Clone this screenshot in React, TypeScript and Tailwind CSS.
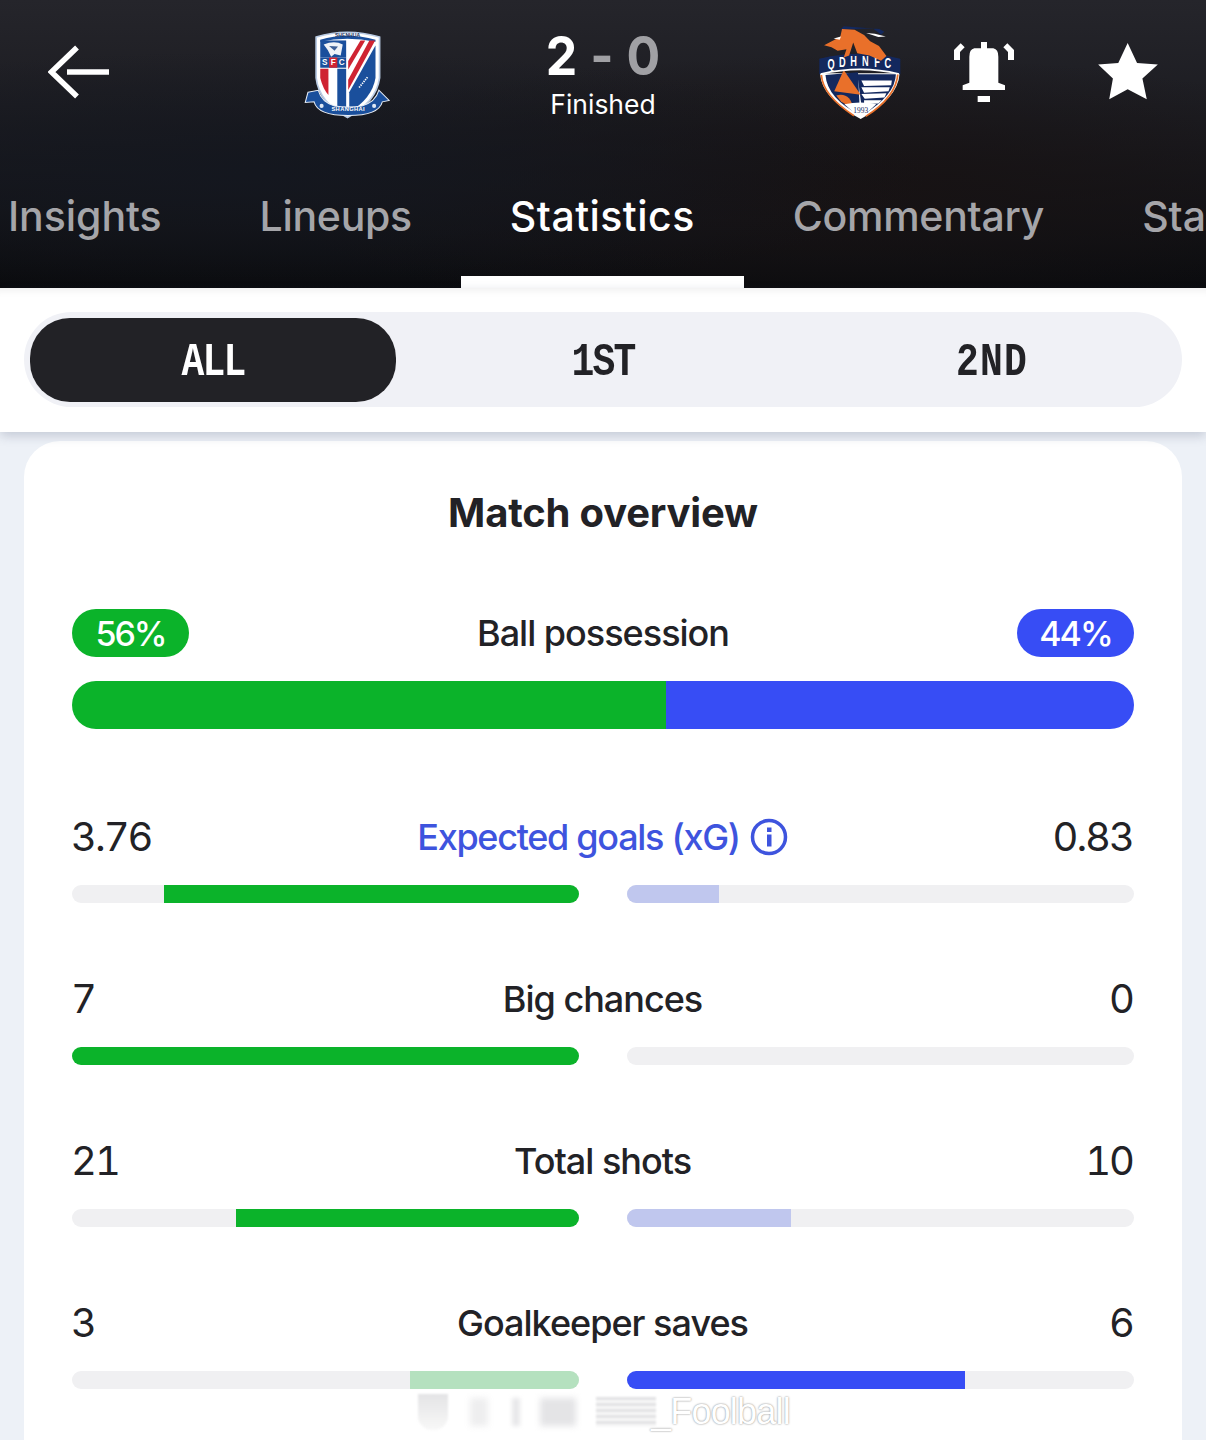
const font = "font-['Inter','Noto_Sans',sans-serif]";

function Shenhua() {
  return (
    <svg width="133" height="113" viewBox="0 9 390 330" className="shrink-0">
      <path d="M106 70Q196 42 292 70L292 190Q282 262 198 306Q114 262 106 190Z" fill="#fff" stroke="#b9cbe4" strokeWidth="5" />
      <path d="M118 78Q196 54 280 78L280 84Q196 66 118 84Z" fill="#1a4f9c" />
      <text x="198" y="70" textAnchor="middle" fontSize="15" fontWeight="700" fill="#26355f" fontFamily="Liberation Sans">SHENHUA</text>
      <path d="M118 80L194 80L194 130L118 130Z" fill="#1a4f9c" />
      <path d="M128 92Q160 78 184 92L178 124L160 120L150 128L140 108Z" fill="#eef2f7" />
      <path d="M144 96L170 98L160 110Z" fill="#3c5f96" />
      <rect x="118" y="130" width="76" height="30" fill="#1a4f9c" />
      <rect x="144" y="130" width="24" height="30" fill="#cf2432" />
      <text x="131" y="153" textAnchor="middle" fontSize="24" fontWeight="700" fill="#fff" fontFamily="Liberation Sans">S</text>
      <text x="156" y="153" textAnchor="middle" fontSize="24" fontWeight="700" fill="#fff" fontFamily="Liberation Sans">F</text>
      <text x="181" y="153" textAnchor="middle" fontSize="24" fontWeight="700" fill="#fff" fontFamily="Liberation Sans">C</text>
      <path d="M118 163L142 163L142 240Q126 222 118 190Z" fill="#cf2432" />
      <path d="M168 163L194 163L194 290Q180 282 168 272Z" fill="#1a4f9c" />
      <path d="M200 140L236 80L250 80L200 165Z" fill="#cf2432" />
      <path d="M200 195L262 80L279 80L200 225Z" fill="#cf2432" />
      <path d="M203 290L203 232L280 95L280 190Q270 250 203 290Z" fill="#1a4f9c" />
      <path d="M232 218L258 186" stroke="#fff" strokeWidth="5" strokeDasharray="4 3" />
      <path d="M82 232L112 226Q122 262 160 272Q200 278 240 272Q280 262 290 226L320 256L300 260Q290 300 200 300Q110 300 100 260L74 262Z" fill="#1a4f9c" stroke="#e8eef6" strokeWidth="3" />
      <text x="200" y="288" textAnchor="middle" fontSize="17" fontWeight="700" letterSpacing="1" fill="#fff" fontFamily="Liberation Sans">SHANGHAI</text>
      <circle cx="122" cy="272" r="6" fill="#dfe8f4" />
      <circle cx="276" cy="272" r="6" fill="#dfe8f4" />
    </svg>
  );
}

function QLetter({ c, x, y }: { c: string; x: number; y: number }) {
  return (
    <text transform={`translate(${x} ${y}) scale(0.8 1.35)`} fontSize="34" fontWeight="700" fill="#fff" fontFamily="Liberation Sans">{c}</text>
  );
}

function Qingdao() {
  return (
    <svg width="122" height="112" viewBox="-2 6 360 330" className="shrink-0">
      <path d="M60 175L295 175Q290 250 180 310Q65 250 60 175Z" fill="#fff" />
      <path d="M76 180L172 172L178 298Q82 250 76 180Z" fill="#13285e" />
      <path d="M170 178L284 178Q282 240 186 298Z" fill="#13285e" />
      <path d="M290 175Q285 245 195 302" stroke="#e9702a" strokeWidth="5" fill="none" />
      <path d="M64 180Q68 240 160 300" stroke="#e9702a" strokeWidth="5" fill="none" />
      <path d="M130 165L180 238L102 228Z" fill="#e9702a" />
      <path d="M108 240Q150 230 158 280L122 258Z" fill="#e9702a" />
      <path d="M132 266L180 308L226 266Q180 256 132 266Z" fill="#fff" />
      <path d="M182 196L272 196L270 210L190 212Z M182 216L266 216L262 228L190 232Z M182 236L256 234L250 246L192 250Z M190 254L242 254L232 264L190 266Z" fill="#fff" />
      <path d="M58 132Q180 102 297 132L297 178Q180 150 58 178Z" fill="#13285e" />
      <path d="M62 177Q180 150 293 177" stroke="#fff" strokeWidth="5" fill="none" />
      <QLetter c="Q" x={82} y={162} />
      <QLetter c="D" x={116} y={156} />
      <QLetter c="H" x={149} y={154} />
      <QLetter c="N" x={184} y={154} />
      <QLetter c="F" x={220} y={156} />
      <QLetter c="C" x={250} y={160} />
      <path d="M120 46L215 42L240 60L250 52L235 44L130 36Z" fill="#13285e" />
      <path d="M72 92L106 74L120 66L125 44L162 46L190 62L208 80L234 94L256 124L240 138L206 122L170 116L158 84L146 122L130 128L138 104L112 108L94 98Z" fill="#e9702a" />
      <path d="M196 56L232 68L254 66L222 58Z" fill="#fff" />
      <path d="M100 72L122 66L118 76Z" fill="#fff" />
      <text x="180" y="292" textAnchor="middle" fontSize="22" fill="#13285e" fontFamily="Liberation Serif">1993</text>
    </svg>
  );
}

function Back() {
  return (
    <svg width="61" height="54" viewBox="0 0 61 54" fill="none" stroke="#fff" strokeWidth="5.5">
      <path d="M29 2.5L3.5 27L29 51.5" />
      <path d="M19 27H61" />
    </svg>
  );
}

function Bell() {
  return (
    <svg width="60" height="60" viewBox="72 66 180 180" fill="#fff">
      <path d="M153 66H171V85H190Q205 88 205 110V188L225 196V210H98V196L118 188V110Q118 88 133 85H153Z" />
      <rect x="143" y="228" width="37" height="18" />
      <path d="M72 120V90L92 70L104 82L90 96V120Z" />
      <path d="M252 120V90L232 70L220 82L234 96V120Z" />
    </svg>
  );
}

function Star() {
  return (
    <svg width="60" height="57" viewBox="505 68 178 170" fill="#fff" className="mt-[-2px]">
      <path d="M593 68L621 128L683 132L637 174L650 236L593 206L538 236L549 174L505 132L565 128Z" />
    </svg>
  );
}

function Tab({ label, active, track }: { label: string; active?: boolean; track: string }) {
  return (
    <div className="relative shrink-0 px-[49px] h-[126px] flex items-center pb-[16px]">
      <span className={`text-[41px] font-medium whitespace-nowrap ${track} ${active ? "text-white" : "text-[#a5a5a9]"}`}>{label}</span>
      {active && <div className="absolute left-0 right-0 bottom-0 h-[12px] bg-white" />}
    </div>
  );
}

function Row({ left, right, label, lw, rw, lLight, rLight, info }: { left: string; right: string; label: string; lw: number; rw: number; lLight?: boolean; rLight?: boolean; info?: boolean }) {
  return (
    <div className="h-[162px] pt-[24px]">
      <div className="flex items-center justify-between h-[48px]">
        <span className="text-[40px] tabular-nums tracking-[-2px] text-[#222226] w-[200px] -ml-px">{left}</span>
        {info ? (
          <span className="flex items-center gap-[10px] text-[36px] font-medium tracking-[-1.3px] text-[#3e54de]">
            {label}
            <svg width="38" height="38" viewBox="0 0 38 38" fill="none" stroke="#3e54de">
              <circle cx="19" cy="19" r="16.5" strokeWidth="3.5" />
              <rect x="17" y="16.5" width="4.5" height="12" fill="#3e54de" stroke="none" />
              <rect x="17" y="9.5" width="4.5" height="4.5" fill="#3e54de" stroke="none" />
            </svg>
          </span>
        ) : (
          <span className="text-[36px] font-medium tracking-[-1px] text-[#222226]">{label}</span>
        )}
        <span className="text-[40px] tabular-nums tracking-[-2px] text-[#222226] w-[200px] text-right pr-px">{right}</span>
      </div>
      <div className="flex justify-between mt-[24px]">
        <div className="w-[507px] h-[18px] rounded-full bg-[#f0f0f2] overflow-hidden flex justify-end">
          <div className={`h-full ${lLight ? "bg-[#b5e1bf]" : "bg-[#0bb32a]"}`} style={{ width: lw }} />
        </div>
        <div className="w-[507px] h-[18px] rounded-full bg-[#f0f0f2] overflow-hidden flex">
          <div className={`h-full ${rLight ? "bg-[#c0c7ee]" : "bg-[#374df5]"}`} style={{ width: rw }} />
        </div>
      </div>
    </div>
  );
}

export default function App() {
  return (
    <div className={`relative w-[1206px] h-[1440px] overflow-hidden bg-[#edf1f7] ${font}`}>
      <header className="h-[288px] bg-[radial-gradient(ellipse_at_22%_60%,#14171f_0%,rgba(20,23,31,0)_50%),radial-gradient(ellipse_at_70%_65%,#171213_0%,rgba(23,18,19,0)_50%),linear-gradient(180deg,#25252b_0%,#1a1a1f_50%,#0a0b0e_100%)]">
        <div className="flex items-center h-[144px]">
          <div className="w-[156px] flex justify-center"><Back /></div>
          <div className="w-[120px] ml-[130px] flex justify-center"><Shenhua /></div>
          <div className="w-[394px] flex flex-col items-center">
            <div className="flex items-center text-[50px] font-bold leading-[56px] h-[56px] mt-[6px] scale-y-[1.08]">
              <span className="text-white">2</span>
              <span className="text-[#a0a0a4] mx-[13px]">-</span>
              <span className="text-[#a0a0a4]">0</span>
            </div>
            <span className="text-[26.5px] leading-[36px] text-white mt-[2px]">Finished</span>
          </div>
          <div className="w-[120px] flex justify-center"><Qingdao /></div>
          <div className="w-[128px] flex justify-center"><Bell /></div>
          <div className="w-[144px] ml-[8px] flex justify-center"><Star /></div>
        </div>
        <nav className="flex ml-[-41px] h-[144px] pt-[18px] overflow-hidden w-[1247px]">
          <Tab label="Insights" track="tracking-[-0.05px]" />
          <Tab label="Lineups" track="tracking-[-0.3px]" />
          <Tab label="Statistics" active track="tracking-[0.45px]" />
          <Tab label="Commentary" track="tracking-[-0.25px]" />
          <Tab label="Standings" track="tracking-[0px]" />
        </nav>
      </header>

      <section className="relative h-[144px] bg-white pt-[24px] px-[24px] shadow-[0_4px_10px_rgba(60,70,100,0.22),inset_0_10px_8px_-8px_rgba(0,0,0,0.07)]">
        <div className="grid grid-cols-3 gap-[24px] h-[95px] pt-[6px] px-[6px] pb-[5px] rounded-full bg-[#f0f1f6] font-['Liberation_Mono',monospace] font-bold text-[38px]">
          <div className="rounded-[40px] bg-[#222226] text-white flex items-center justify-center pt-[5px]">
            <span className="inline-block scale-y-[1.2] tracking-[-1.8px]">ALL</span>
          </div>
          <div className="text-[#222226] flex items-center justify-center pt-[5px]">
            <span className="inline-block scale-y-[1.2] tracking-[-1.8px]">1ST</span>
          </div>
          <div className="text-[#222226] flex items-center justify-center pt-[5px]">
            <span className="inline-block scale-y-[1.2] tracking-[1.2px] mr-[2px]">2ND</span>
          </div>
        </div>
      </section>

      <main className="mt-[9px] mx-[24px] h-[1100px] rounded-t-[36px] bg-white px-[48px] pt-[48px]">
        <h2 className="text-center text-[40px] leading-[48px] font-bold tracking-[-0.2px] text-[#222226]">Match overview</h2>
        <div className="flex items-center justify-between mt-[72px] h-[48px]">
          <span className="w-[117px] h-[48px] rounded-full bg-[#0bb32a] text-white text-[34px] font-medium tracking-[-2px] flex items-center justify-center">56%</span>
          <span className="text-[36px] font-medium tracking-[-1px] text-[#222226]">Ball possession</span>
          <span className="w-[117px] h-[48px] rounded-full bg-[#374df5] text-white text-[34px] font-medium tracking-[-2px] flex items-center justify-center">44%</span>
        </div>
        <div className="flex h-[48px] mt-[24px] rounded-full overflow-hidden">
          <div className="w-[594px] bg-[#0bb32a]" />
          <div className="flex-1 bg-[#374df5]" />
        </div>
        <div className="mt-[60px]">
          <Row left="3.76" right="0.83" label="Expected goals (xG)" lw={415} rw={92} rLight info />
          <Row left="7" right="0" label="Big chances" lw={507} rw={0} />
          <Row left="21" right="10" label="Total shots" lw={343} rw={164} rLight />
          <Row left="3" right="6" label="Goalkeeper saves" lw={169} rw={338} lLight />
        </div>
      </main>

      <div className="absolute left-[416px] top-[1390px] flex items-center h-[44px]">
        <div className="w-[30px] h-[36px] rounded-b-[14px] bg-[linear-gradient(180deg,#e4e4e6,#f8f8f8)] blur-[1px] ml-[2px]" />
        <div className="w-[18px] h-[28px] bg-[#eeeeef] blur-[3px] ml-[22px]" />
        <div className="w-[8px] h-[28px] bg-[#e8e8ea] blur-[2px] ml-[24px]" />
        <div className="w-[36px] h-[28px] bg-[#e4e4e6] blur-[3px] ml-[20px]" />
        <div className="w-[60px] h-[30px] bg-[repeating-linear-gradient(180deg,#e2e2e4_0px,#e2e2e4_3px,#f8f8f8_3px,#f8f8f8_6px)] blur-[1px] ml-[20px]" />
        <span className="ml-[-5px] text-[36px] tracking-[-0.8px] text-white [text-shadow:0_0_2px_#777777] font-['Liberation_Sans',sans-serif]">_Foolball</span>
      </div>
    </div>
  );
}
